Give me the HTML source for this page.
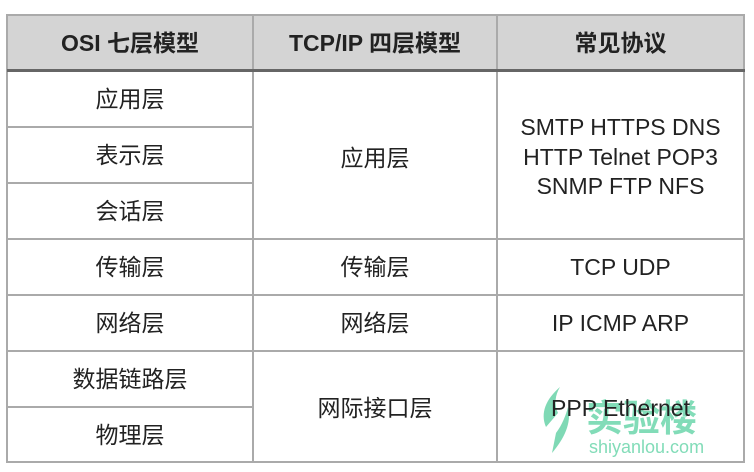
<!DOCTYPE html><html><head><style>
body{margin:0;background:#fff;width:754px;height:472px;position:relative;overflow:hidden;font-family:"Liberation Sans","Noto Sans CJK SC",sans-serif;color:#222}
.b{position:absolute;background:#aaa}
.t{position:absolute;text-align:center;font-size:23px;line-height:28px;white-space:nowrap}
.h{font-weight:bold;font-size:23px}
</style></head><body>
<div style="position:absolute;left:7px;top:14px;width:737px;height:56px;background:#d4d4d4"></div>
<div class="b" style="left:7px;top:14px;width:738px;height:2px"></div>
<div class="b" style="left:7px;top:461px;width:738px;height:2px"></div>
<div class="b" style="left:6px;top:14px;width:2px;height:449px"></div>
<div class="b" style="left:743px;top:14px;width:2px;height:449px"></div>
<div class="b" style="left:252px;top:14px;width:2px;height:449px"></div>
<div class="b" style="left:496px;top:14px;width:2px;height:449px"></div>
<div class="b" style="left:7px;top:69px;width:738px;height:3px;background:#666"></div>
<div class="b" style="left:7px;top:126px;width:246px;height:2px"></div>
<div class="b" style="left:7px;top:182px;width:246px;height:2px"></div>
<div class="b" style="left:7px;top:238px;width:738px;height:2px"></div>
<div class="b" style="left:7px;top:294px;width:738px;height:2px"></div>
<div class="b" style="left:7px;top:350px;width:738px;height:2px"></div>
<div class="b" style="left:7px;top:406px;width:246px;height:2px"></div>

<div class="t h" style="left:7px;width:246px;top:29px">OSI 七层模型</div>
<div class="t h" style="left:253px;width:244px;top:29px">TCP/IP 四层模型</div>
<div class="t h" style="left:497px;width:247px;top:29px">常见协议</div>

<div class="t" style="left:7px;width:246px;top:85px">应用层</div>
<div class="t" style="left:7px;width:246px;top:141px">表示层</div>
<div class="t" style="left:7px;width:246px;top:197px">会话层</div>
<div class="t" style="left:7px;width:246px;top:253px">传输层</div>
<div class="t" style="left:7px;width:246px;top:309px">网络层</div>
<div class="t" style="left:7px;width:246px;top:365px">数据链路层</div>
<div class="t" style="left:7px;width:246px;top:421px">物理层</div>

<div class="t" style="left:253px;width:244px;top:144px">应用层</div>
<div class="t" style="left:253px;width:244px;top:253px">传输层</div>
<div class="t" style="left:253px;width:244px;top:309px">网络层</div>
<div class="t" style="left:253px;width:244px;top:394px">网际接口层</div>

<div class="t" style="left:497px;width:247px;top:113px;line-height:29.5px">SMTP HTTPS DNS<br>HTTP Telnet POP3<br>SNMP FTP NFS</div>
<div class="t" style="left:497px;width:247px;top:253px">TCP UDP</div>
<div class="t" style="left:497px;width:247px;top:309px">IP ICMP ARP</div>

<svg style="position:absolute;left:538px;top:385px" width="40" height="70"><path d="M22 2 C8 14 2 28 8 42 L20 28 C16 20 17 10 22 2Z M30 22 C34 38 26 54 14 68 L18 48 C24 40 28 30 30 22Z" fill="#7fd9b5"/></svg>
<div class="t" style="left:586px;width:150px;top:398px;font-size:37px;line-height:42px;color:#82dcb8;font-weight:bold;text-align:left">实验楼</div>
<div class="t" style="left:589px;width:150px;top:437px;font-size:18px;line-height:20px;color:#82dcb8;text-align:left">shiyanlou.com</div>
<div class="t" style="left:497px;width:247px;top:394px;color:#222">PPP Ethernet</div>
</body></html>
